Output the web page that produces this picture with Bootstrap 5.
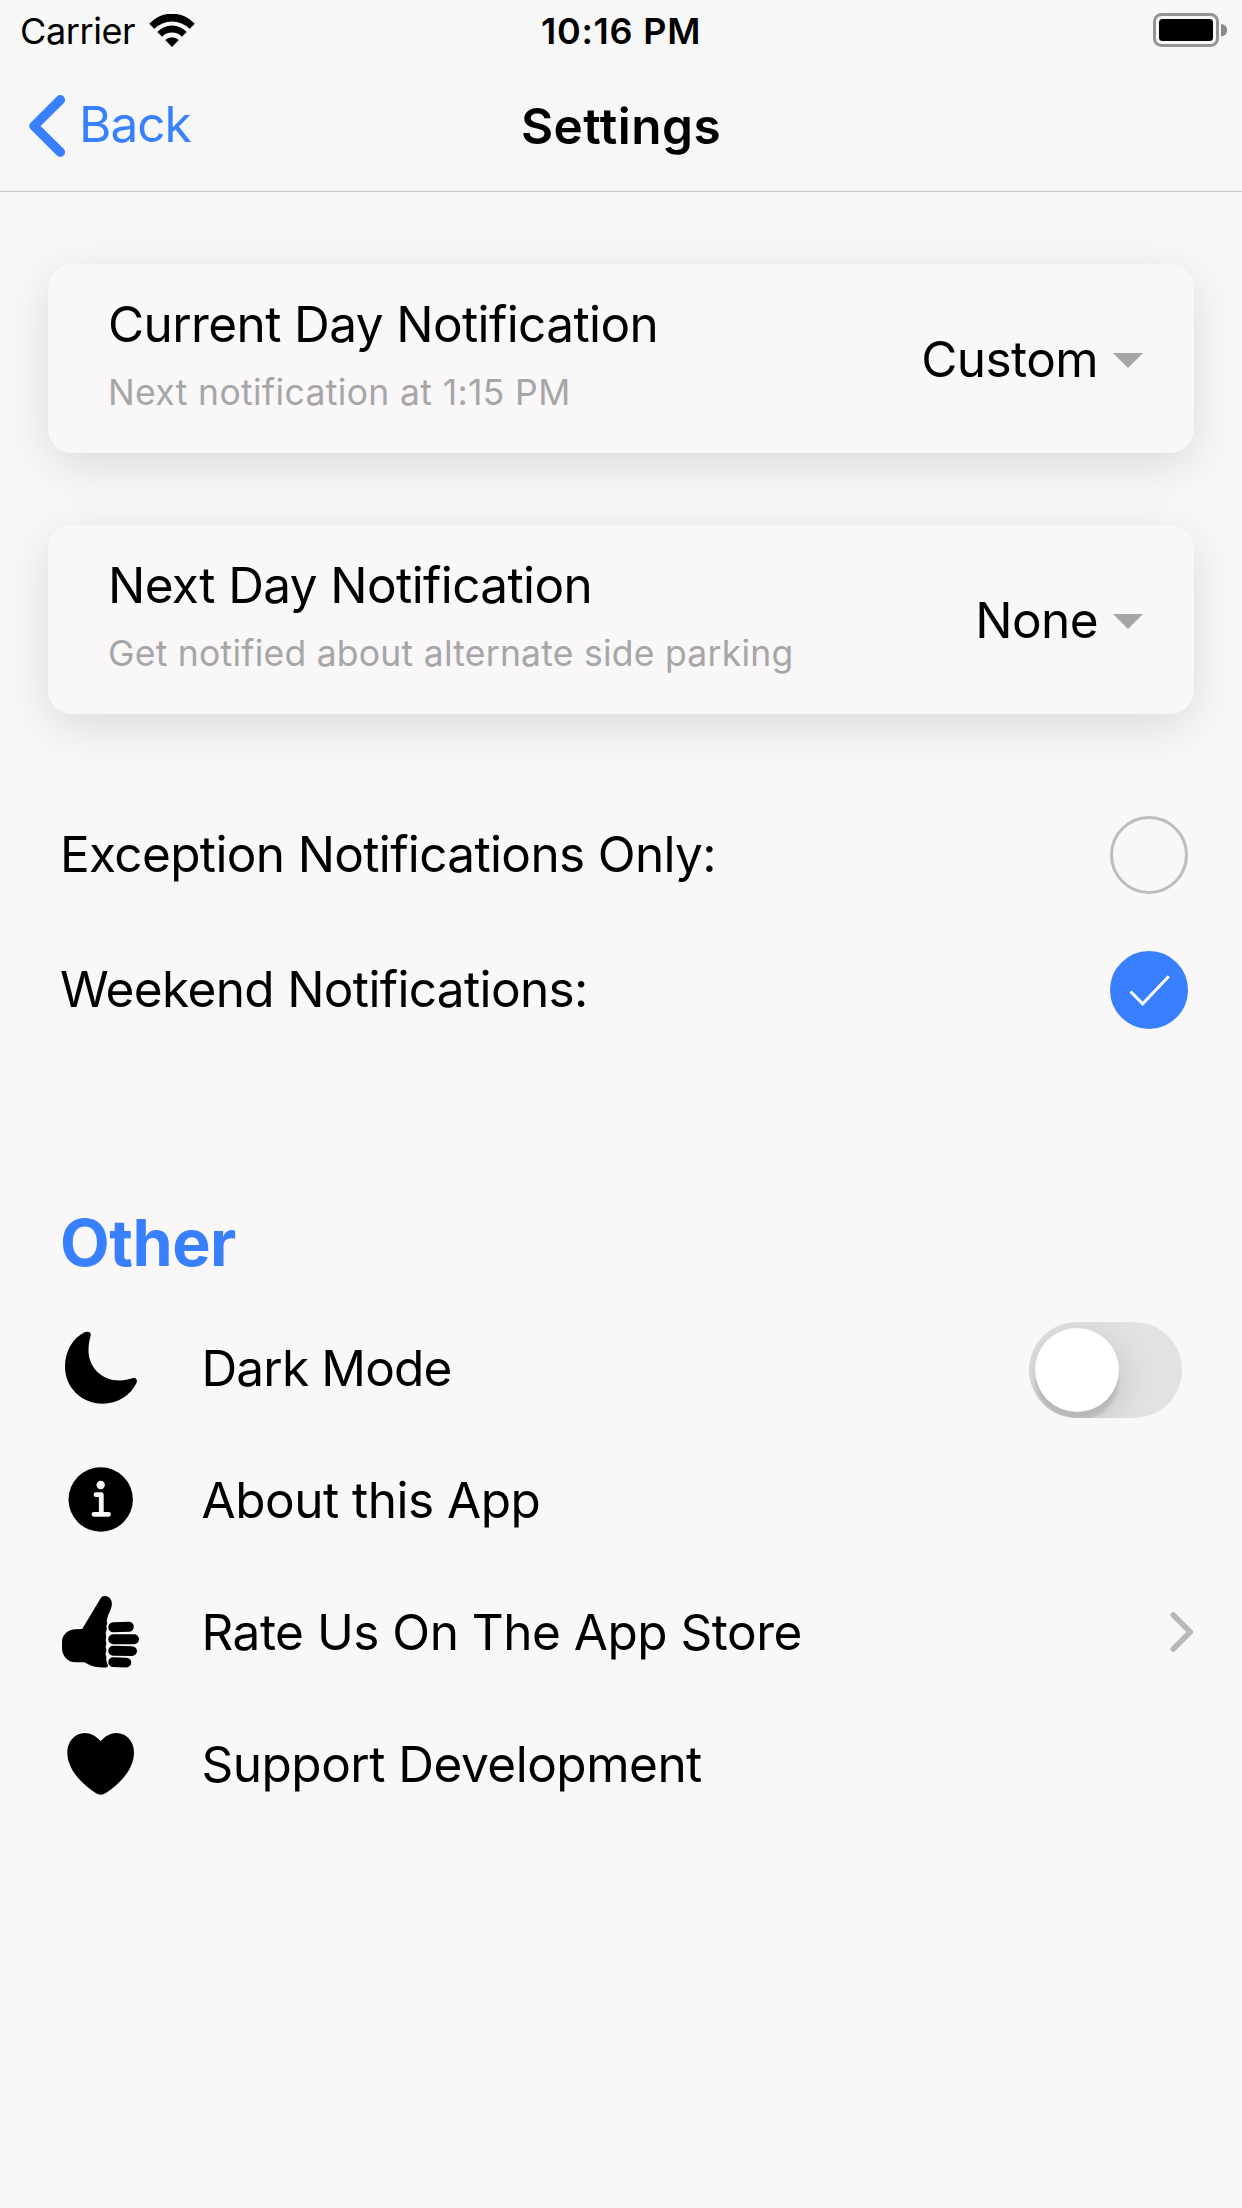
<!DOCTYPE html>
<html lang="en">
<head>
<meta charset="utf-8">
<meta name="viewport" content="width=device-width, initial-scale=1">
<title>Settings</title>
<link href="https://cdn.jsdelivr.net/npm/bootstrap@5.3.0/dist/css/bootstrap.min.css" rel="stylesheet">
<style>
  :root { --accent: #3880ff; --page: #f9f7f8; --muted: #a6a6a6; }
  body {
    font-family: Inter, "Liberation Sans", sans-serif;
    background: var(--page); color: #000;
    min-height: 2208px;
    font-size: 49.5px; line-height: 60px; letter-spacing: -.6px;
    white-space: nowrap;
  }
  svg { display: block; flex: none; }
  a { color: inherit; text-decoration: none; }

  .app-header { height: 192px; background: #f7f7f7; border-bottom: 1px solid #c8c7cc; }
  .status-bar { height: 60px; padding: 2px 15px 0 20px; font-size: 36px; line-height: 58px; }
  .status-side { flex: 1 1 0; }
  .carrier { width: 129px; letter-spacing: -.4px; }
  .clock { font-weight: 600; letter-spacing: .75px; margin-right: 5px; }
  .battery { margin-bottom: 2px; }
  .title-bar { height: 131px; padding: 0 29px; }
  .back-link { color: var(--accent); gap: 14px; letter-spacing: -1px; }
  .back-link span { margin-bottom: 3px; }
  .page-title { font-size: 49.5px; font-weight: 600; line-height: 60px; letter-spacing: .5px; }

  .notice-list { padding: 72px 48px 0; gap: 72px; }
  .notice-card {
    height: 189px; padding: 0 51px 0 60px;
    background: var(--page); border: 0; border-radius: 24px;
    box-shadow: 0 12px 48px rgba(0, 0, 0, .12);
  }
  .notice-hint { margin-top: 17px; font-size: 35.5px; line-height: 44px; letter-spacing: .36px; color: var(--muted); }
  .hint-long { letter-spacing: .25px; }
  .notice-text { margin-top: -8px; }
  .notice-value { gap: 15px; }
  .notice-value svg { margin-top: 3px; }

  .check-list { margin-top: 72px; padding: 0 54px 0 60px; }
  .check-row { height: 135px; }
  .check-row span:first-child { letter-spacing: -.65px; }
  .check-dot { width: 78px; height: 78px; margin-top: 2px; border: 3px solid #bdbdbd; border-radius: 50%; }
  .check-dot.on { background: var(--accent); border-color: var(--accent); }

  .section-title { margin: 142px 0 14px 60px; font-size: 64.5px; line-height: 90px; font-weight: 700; letter-spacing: -.5px; color: var(--accent); }
  .option-row { height: 132px; padding: 0 48px 0 60px; letter-spacing: -.5px; }
  .option-tight { letter-spacing: -.85px; }
  .option-icon { width: 80px; height: 80px; margin-right: 61.5px; }
  .toggle-track {
    width: 153px; height: 96px; padding: 6px; margin: 4px 12px 0 0;
    background: #e3e1e2; border-radius: 48px; overflow: hidden;
  }
  .toggle-knob { width: 84px; height: 84px; border-radius: 50%; background: #fff; box-shadow: 0 9px 36px rgba(0, 0, 0, .16), 0 9px 3px rgba(0, 0, 0, .1); }
</style>
</head>
<body>
<header class="app-header">
  <div class="status-bar d-flex align-items-center">
    <div class="status-side d-flex align-items-center">
      <span class="carrier">Carrier</span>
      <svg width="46" height="34" viewBox="149 13 46 34">
        <path d="M149.200 22.700A31 31 0 0 1 194.800 22.700L189.700 27.700A25.500 25.500 0 0 0 154.300 27.700Z"/>
        <path d="M157.300 31A20 20 0 0 1 186.700 31L181.900 35.700A13.500 13.500 0 0 0 162.100 35.700Z"/>
        <path d="M165.200 39.100A9.500 9.500 0 0 1 178.800 39.100L172 46Z"/>
      </svg>
    </div>
    <span class="clock">10:16 PM</span>
    <div class="status-side d-flex justify-content-end">
      <svg class="battery" width="75" height="36" viewBox="0 0 75 36">
        <rect x="2.500" y="2.500" width="63" height="31" rx="7" fill="none" stroke="#949494" stroke-width="3"/>
        <rect x="7" y="7" width="54" height="22" rx="3.500"/>
        <path d="M69 12a6.200 6.200 0 0 1 0 12.400z" fill="#8a8a8a"/>
      </svg>
    </div>
  </div>
  <div class="title-bar d-flex align-items-center">
    <div class="status-side d-flex">
      <a href="#" class="back-link d-flex align-items-center">
        <svg width="36" height="62" viewBox="0 0 36 62" fill="none" stroke="#3880ff" stroke-width="9.500" stroke-linecap="round" stroke-linejoin="round"><path d="M31.300 4.800 5 31l26.300 26.200"/></svg>
        <span>Back</span>
      </a>
    </div>
    <h1 class="page-title mb-0">Settings</h1>
    <div class="status-side"></div>
  </div>
</header>

<main>
  <section class="notice-list d-flex flex-column">
    <div class="notice-card card flex-row align-items-center justify-content-between">
      <div class="notice-text">
        <div>Current Day Notification</div>
        <div class="notice-hint">Next notification at 1:15 PM</div>
      </div>
      <div class="notice-value d-flex align-items-center">
        <span>Custom</span>
        <svg width="30" height="15" viewBox="0 0 30 15"><path d="M0 0h30L15 15z" fill="#a6a6a6"/></svg>
      </div>
    </div>
    <div class="notice-card card flex-row align-items-center justify-content-between">
      <div class="notice-text">
        <div>Next Day Notification</div>
        <div class="notice-hint hint-long">Get notified about alternate side parking</div>
      </div>
      <div class="notice-value d-flex align-items-center">
        <span>None</span>
        <svg width="30" height="15" viewBox="0 0 30 15"><path d="M0 0h30L15 15z" fill="#a6a6a6"/></svg>
      </div>
    </div>
  </section>

  <section class="check-list">
    <div class="check-row d-flex align-items-center justify-content-between">
      <span>Exception Notifications Only:</span>
      <span class="check-dot"></span>
    </div>
    <div class="check-row d-flex align-items-center justify-content-between">
      <span>Weekend Notifications:</span>
      <span class="check-dot on d-flex align-items-center justify-content-center">
        <svg width="72" height="72" viewBox="0 0 72 72" fill="none" stroke="#fff" stroke-width="3"><path d="m17.500 37.500 12.200 12.300L55.800 22.300"/></svg>
      </span>
    </div>
  </section>

  <h2 class="section-title">Other</h2>
  <section>
    <div class="option-row d-flex align-items-center">
      <svg class="option-icon" viewBox="0 0 80 80"><path d="M24.500 4.300 C27.500 2.800 31.500 3.800 30.700 7.500 C29.200 12.500 28.500 17 28.500 22.500 C28.500 39.500 42 52.500 59.500 52.500 C64.500 52.500 68.500 51.200 72.500 50.200 C76 49.300 77.800 51.800 76.600 54.800 C70.500 67.500 57.500 75.700 42.500 75.700 C21.500 75.700 5 59.500 5 38.500 C5 23.500 12.500 10.500 24.500 4.300Z"/></svg>
      <span class="option-tight">Dark Mode</span>
      <div class="toggle-track ms-auto"><div class="toggle-knob"></div></div>
    </div>
    <div class="option-row d-flex align-items-center">
      <svg class="option-icon" viewBox="0 0 80 80">
        <circle cx="40.700" cy="39.500" r="32.200"/>
        <circle cx="40.700" cy="25" r="4.200" fill="#f9f7f8"/>
        <path d="M36 34.700h5.300V54.300M34 54.300h14.600" fill="none" stroke="#f9f7f8" stroke-width="4.800" stroke-linecap="round" stroke-linejoin="round"/>
      </svg>
      <span>About this App</span>
    </div>
    <div class="option-row d-flex align-items-center">
      <svg class="option-icon" viewBox="0 0 80 80">
        <path d="M22.200 37 L40.500 6.500 C42 3.800 44 3.500 46.500 4.200 C50.500 5.300 52.600 9 51.700 14 C50.800 18.500 48.300 22 47.300 26 Q46.300 28.500 47.300 31 Q45.800 33.500 46.800 37 Q45 41 46.200 45 Q45 48.500 46.300 51.500 Q45 55 46.400 58 Q44.800 61.500 46.400 65 Q45.600 68.500 48 73.500 Q48 75.600 46 75.600 C38.500 75.800 31 74.500 24.500 70.300 H15.500 C7.500 70.300 2 63.500 2 56.500 V50 C2 42.500 8.500 37.300 15.500 37.300Z"/>
        <rect x="48.300" y="30" width="25.500" height="10" rx="5" transform="rotate(-2 61 35)"/>
        <rect x="48.300" y="42.200" width="30.700" height="10" rx="5"/>
        <rect x="48.300" y="54" width="28.700" height="9.800" rx="4.900" transform="rotate(1 62 59)"/>
        <rect x="48.300" y="65.400" width="23" height="9.800" rx="4.900" transform="rotate(2 60 70)"/>
      </svg>
      <span>Rate Us On The App Store</span>
      <svg class="ms-auto" width="25" height="42" viewBox="0 0 25 42" fill="none" stroke="#b9b8b9" stroke-width="5.500" stroke-linecap="round" stroke-linejoin="round"><path d="m4.300 4 17 17-17 17"/></svg>
    </div>
    <div class="option-row d-flex align-items-center">
      <svg class="option-icon" viewBox="0 0 80 80"><path d="M40.700 17.200 C45.500 12 50.500 9 56.500 9 C66.500 9 74 17.500 74 28.500 C74 44 62 58.500 45.500 69.300 Q40.700 72.200 36 69.300 C19.500 58.500 7.300 44 7.300 28.500 C7.300 17.500 14.800 9 24.800 9 C30.800 9 35.800 12 40.700 17.200Z"/></svg>
      <span>Support Development</span>
    </div>
  </section>
</main>
<script src="https://cdn.jsdelivr.net/npm/bootstrap@5.3.0/dist/js/bootstrap.bundle.min.js"></script>
</body>
</html>
